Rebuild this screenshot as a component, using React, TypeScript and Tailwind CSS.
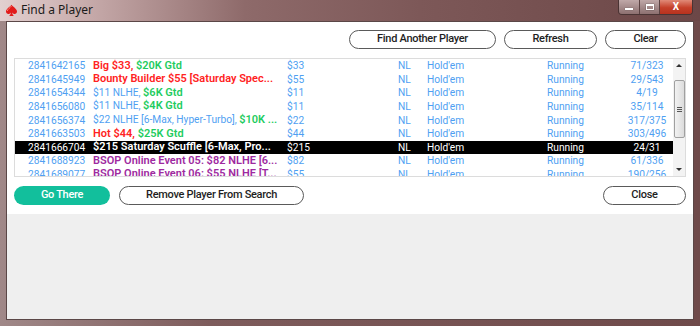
import React from "react";

type Seg = { t: string; c: string; b?: boolean };
type Row = { id: string; name: Seg[]; buy: string; count: string; sel?: boolean };

const RED = "text-[#ff2222]";
const GREEN = "text-[#1fcc5f]";
const BLUE = "text-[#4f9ff2]";
const PURPLE = "text-[#9e2a9f]";

const rows: Row[] = [
  { id: "2841642165", name: [{ t: "Big $33, ", c: RED, b: true }, { t: "$20K Gtd", c: GREEN, b: true }], buy: "$33", count: "71/323" },
  { id: "2841645949", name: [{ t: "Bounty Builder $55 [Saturday Spec...", c: RED, b: true }], buy: "$55", count: "29/543" },
  { id: "2841654344", name: [{ t: "$11 NLHE, ", c: BLUE }, { t: "$6K Gtd", c: GREEN, b: true }], buy: "$11", count: "4/19" },
  { id: "2841656080", name: [{ t: "$11 NLHE, ", c: BLUE }, { t: "$4K Gtd", c: GREEN, b: true }], buy: "$11", count: "35/114" },
  { id: "2841656374", name: [{ t: "$22 NLHE [6-Max, Hyper-Turbo], ", c: BLUE }, { t: "$10K ...", c: GREEN, b: true }], buy: "$22", count: "317/375" },
  { id: "2841663503", name: [{ t: "Hot $44, ", c: RED, b: true }, { t: "$25K Gtd", c: GREEN, b: true }], buy: "$44", count: "303/496" },
  { id: "2841666704", name: [{ t: "$215 Saturday Scuffle [6-Max, Pro...", c: "text-white", b: true }], buy: "$215", count: "24/31", sel: true },
  { id: "2841688923", name: [{ t: "BSOP Online Event 05: $82 NLHE [6...", c: PURPLE, b: true }], buy: "$82", count: "61/336" },
  { id: "2841689077", name: [{ t: "BSOP Online Event 06: $55 NLHE [T...", c: PURPLE, b: true }], buy: "$55", count: "190/256" },
];

function Spade() {
  return (
    <svg width="13" height="13" viewBox="0 0 13 13">
      <path d="M6.5 0.8 C4.5 3.3 1 5 1 7.6 C1 9.4 2.6 10.4 4.1 9.9 C4.9 9.6 5.5 9.1 5.9 8.5 C5.7 9.9 5.1 11 4.2 12 L8.8 12 C7.9 11 7.3 9.9 7.1 8.5 C7.5 9.1 8.1 9.6 8.9 9.9 C10.4 10.4 12 9.4 12 7.6 C12 5 8.5 3.3 6.5 0.8 Z" fill="#e21b1b" />
      <path d="M6.5 2 C5 4 2.5 5.2 2.3 7" stroke="#ff9a8a" strokeWidth="0.8" fill="none" />
    </svg>
  );
}

function Btn({ children, w }: { children: React.ReactNode; w: string }) {
  return (
    <div className={`${w} h-[19px] rounded-full border border-[#5a5a5a] bg-white flex items-center justify-center text-[11px] font-medium text-[#1e1e1e] tracking-[-0.3px]`}>
      {children}
    </div>
  );
}

export default function App() {
  return (
    <div
      className="w-[700px] h-[326px] flex flex-col bg-[linear-gradient(90deg,#a08888_0%,#7e5c5c_30%,#6f4a4a_100%)]"
      style={{ fontFamily: "Roboto, 'Liberation Sans', sans-serif" }}
    >
      {/* title bar */}
      <div className="h-[21px] flex items-start relative bg-[linear-gradient(90deg,#e2d0d0_0%,#c8acac_12%,#8e6a6a_35%,#7d5858_60%,#6c4747_100%)]">
        <div className="flex items-center h-[20px] pl-[5px] gap-[3px]">
          <Spade />
          <span className="text-[12px] text-[#1a1a1a]" style={{ fontFamily: "'Noto Sans', 'Open Sans', sans-serif" }}>Find a Player</span>
        </div>
        <div className="ml-auto mr-[7px] flex h-[15px] rounded-b-[4px] border border-t-0 border-[#4a3434] overflow-hidden">
          <div className="w-[21px] flex items-center justify-center bg-[linear-gradient(180deg,#bfa8a8,#8d7070)] border-r border-[#5a4242]">
            <div className="w-[8px] h-[2px] bg-white mt-[4px] shadow-[0_0_1px_#333]" />
          </div>
          <div className="w-[20px] flex items-center justify-center bg-[linear-gradient(180deg,#bfa8a8,#8d7070)] border-r border-[#5a4242]">
            <div className="w-[8px] h-[6px] border border-white border-t-2 shadow-[0_0_1px_#333]" />
          </div>
          <div className="w-[32px] flex items-center justify-center bg-[linear-gradient(180deg,#e08a78,#c5402a_55%,#b8321e)]">
            <span className="text-white text-[10px] font-bold leading-none">X</span>
          </div>
        </div>
      </div>

      {/* client area */}
      <div className="flex-1 ml-[6px] mr-[6px] mb-[6px] border border-[#5b4747] flex flex-col">
        <div className="bg-white h-[192px] flex flex-col px-[7px] pt-[8px]">
          <div className="flex justify-end gap-[8px] h-[19px]">
            <Btn w="w-[147px]">Find Another Player</Btn>
            <Btn w="w-[93px]">Refresh</Btn>
            <Btn w="w-[81px]">Clear</Btn>
          </div>

          <div className="mt-[9px] h-[119px] border border-[#dcdcdc] flex overflow-hidden">
            <div className="flex-1 flex flex-col text-[10.2px] overflow-hidden">
              {rows.map((r) => {
                const base = r.sel ? "text-white" : BLUE;
                return (
                  <div key={r.id} className={`h-[13.6px] shrink-0 flex items-center whitespace-nowrap ${r.sel ? "bg-black" : ""}`}>
                    <div className={`w-[78px] pl-[13px] ${base}`}>{r.id}</div>
                    <div className="w-[194px] overflow-hidden">
                      {r.name.map((s, i) => (
                        <span key={i} className={`${s.c} ${s.b ? "font-semibold text-[11px]" : "text-[10.2px]"}`}>{s.t}</span>
                      ))}
                    </div>
                    <div className={`w-[111px] ${base}`}>{r.buy}</div>
                    <div className={`w-[29px] ${base}`}>NL</div>
                    <div className={`w-[120px] ${base}`}>Hold'em</div>
                    <div className={`w-[75px] ${base}`}>Running</div>
                    <div className={`w-[50px] text-center ${base}`}>{r.count}</div>
                  </div>
                );
              })}
            </div>
            {/* scrollbar */}
            <div className="w-[12px] bg-[#f3f3f3] flex flex-col items-center">
              <div className="h-[13px] flex items-center justify-center">
                <div className="w-0 h-0 border-l-[3px] border-r-[3px] border-b-[3px] border-l-transparent border-r-transparent border-b-[#333]" />
              </div>
              <div className="w-[11px] h-[58px] mt-[8px] rounded-[2px] border border-[#a0a0a0] bg-[linear-gradient(90deg,#f2f2f2,#dcdcdc)] flex flex-col items-center justify-center gap-[1px]">
                <div className="w-[5px] h-px bg-[#555]" />
                <div className="w-[5px] h-px bg-[#555]" />
                <div className="w-[5px] h-px bg-[#555]" />
              </div>
              <div className="flex-1" />
              <div className="h-[13px] flex items-center justify-center">
                <div className="w-0 h-0 border-l-[3px] border-r-[3px] border-t-[3px] border-l-transparent border-r-transparent border-t-[#333]" />
              </div>
            </div>
          </div>

          <div className="mt-[9px] flex h-[19px] gap-[9px]">
            <div className="w-[96px] h-[19px] rounded-full bg-[#12bf9c] flex items-center justify-center text-[11px] font-medium text-white tracking-[-0.3px]">Go There</div>
            <Btn w="w-[185px]">Remove Player From Search</Btn>
            <div className="ml-auto">
              <Btn w="w-[83px]">Close</Btn>
            </div>
          </div>
        </div>
        <div className="flex-1 bg-[#efefef]" />
      </div>
    </div>
  );
}
